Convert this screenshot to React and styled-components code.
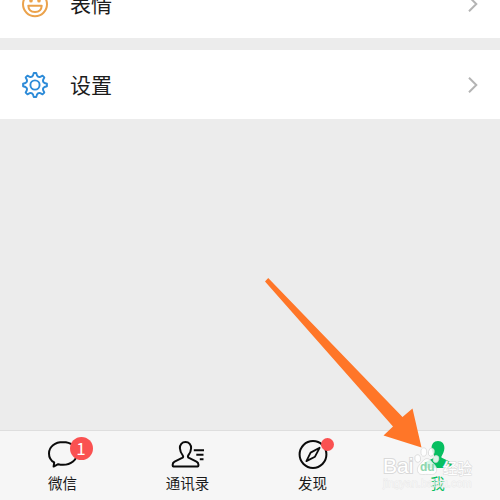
import React from "react";
import styled, { createGlobalStyle } from "styled-components";

const GlobalStyle = createGlobalStyle`
  * {
    box-sizing: border-box;
  }
  body {
    margin: 0;
    overflow: hidden;
    font-family: "Noto Sans CJK SC", sans-serif;
  }
`;

const ChevronIcon = () => (
  <svg width="12" height="18" viewBox="0 0 12 18" fill="none">
    <path d="M2 1.8L9.3 9L2 16.2" stroke="#b4b4b4" strokeWidth="2" />
  </svg>
);

const SmileIcon = () => (
  <svg width="28" height="28" viewBox="0 0 28 28" fill="none" stroke="#eba24b" strokeWidth="2">
    <circle cx="14" cy="14.3" r="12" />
    <path d="M7.3 15.8H20.7C20.5 19.8 17.8 22 14 22S7.5 19.8 7.3 15.8Z" strokeLinejoin="round" />
    <ellipse cx="10" cy="10.4" rx="0.8" ry="1.2" fill="#eba24b" />
    <ellipse cx="18" cy="10.4" rx="0.8" ry="1.2" fill="#eba24b" />
  </svg>
);

const GEAR_TEETH = 8;

// rounded cog outline: every tooth is an arc of the outer radius joined by a valley
const gearPath = () => {
  const point = (radius, degrees) => {
    const angle = (degrees * Math.PI) / 180;
    return `${(14 + radius * Math.sin(angle)).toFixed(2)} ${(14 - radius * Math.cos(angle)).toFixed(2)}`;
  };
  let path = `M${point(12, -6)}`;
  for (let i = 0; i < GEAR_TEETH; i++) {
    const a = i * 45;
    path += `L${point(12, a + 6)}L${point(9.7, a + 12)}Q${point(8.1, a + 22.5)} ${point(9.7, a + 33)}L${point(12, a + 39)}`;
  }
  return `${path}Z`;
};

const GearIcon = () => (
  <svg width="28" height="28" viewBox="0 0 28 28" fill="none" stroke="#2d8bd8" strokeWidth="1.9">
    <path d={gearPath()} strokeLinejoin="round" />
    <circle cx="14" cy="14" r="4.6" />
  </svg>
);

const ChatIcon = () => (
  <svg width="34" height="30" viewBox="0 0 34 30" fill="none" stroke="#0b0b0b" strokeWidth="2">
    <path
      d="M17 2C8.9 2 3 6.9 3 13.4C3 17.3 5 20.6 8.2 22.4L7.6 26.6L12.2 24.2C13.7 24.6 15.3 24.8 17 24.8C25.1 24.8 31 19.8 31 13.4S25.1 2 17 2Z"
      strokeLinejoin="round"
    />
  </svg>
);

const ContactsIcon = () => (
  <svg width="34" height="30" viewBox="0 0 34 30" fill="none" stroke="#0b0b0b" strokeWidth="2">
    <path
      d="M14.5 2C10.9 2 8.7 4.7 8.9 8.3C9.1 11.5 10.3 13.6 11.8 15.5C12.5 16.5 12.2 17.3 11.1 17.9L3.6 21.7C2.3 22.4 1.7 23.3 1.7 24.6V25.7C1.7 26.2 2 26.4 2.4 26.4H26.7C27.1 26.4 27.4 26.2 27.4 25.7V24.6C27.4 23.3 26.8 22.4 25.5 21.7L18 17.9C16.9 17.3 16.6 16.5 17.2 15.5C18.8 13.6 20 11.5 20.1 8.3C20.3 4.7 18.1 2 14.5 2Z"
      strokeLinejoin="round"
    />
    <path d="M22.8 10.3H33M25.3 14.8H32.5M28.8 19.2H32.5" />
  </svg>
);

const CompassIcon = () => (
  <svg width="34" height="30" viewBox="0 0 34 30" fill="none" stroke="#0b0b0b" strokeWidth="2">
    <circle cx="17" cy="14.5" r="13.4" />
    <path d="M23.6 7.8L19 16.7L10.4 21.1L14.6 12.6Z" strokeWidth="1.8" strokeLinejoin="round" />
  </svg>
);

const MeIcon = () => (
  <svg width="34" height="30" viewBox="0 0 34 30" fill="#06bf60">
    <path d="M17 1C12.8 1 10.4 4.2 10.6 8.2C10.8 11.6 12 13.8 13.3 15.9C13.9 17 13.7 17.4 12.7 17.9L5.5 21.5C3.8 22.4 3.1 23.4 3.1 25V26.8C3.1 27.6 3.5 28 4.2 28H29.8C30.5 28 30.9 27.6 30.9 26.8V25C30.9 23.4 30.2 22.4 28.5 21.5L21.3 17.9C20.3 17.4 20.1 17 20.7 15.9C22 13.8 23.2 11.6 23.4 8.2C23.6 4.2 21.2 1 17 1Z" />
  </svg>
);

const PawIcon = () => (
  <svg width="26" height="30" viewBox="0 0 26 30" fill="#fff" fillOpacity="0.85" stroke="#d6d6d6" strokeWidth="0.7">
    <ellipse cx="3.7" cy="11.5" rx="2.9" ry="3.8" transform="rotate(-12 3.7 11.5)" />
    <ellipse cx="9.8" cy="5" rx="2.9" ry="4.2" />
    <ellipse cx="17.3" cy="5.2" rx="2.9" ry="4.1" transform="rotate(12 17.3 5.2)" />
    <ellipse cx="22" cy="12" rx="2.8" ry="3.6" transform="rotate(12 22 12)" />
    <path
      d="M13 11.5C16 11.5 17.1 14.4 19.4 16.6C21.7 18.8 23.4 21.2 22.2 24.8C20.9 28.4 16.8 27.4 13 27.4S5.1 28.4 3.8 24.8C2.6 21.2 4.3 18.8 6.6 16.6C8.9 14.4 10 11.5 13 11.5Z"
    />
  </svg>
);

const App = () => {
  return (
    <Screen>
      <GlobalStyle />
      <Row className="row--cut">
        <SmileIcon />
        <RowLabel>表情</RowLabel>
        <ChevronIcon />
      </Row>
      <Row>
        <GearIcon />
        <RowLabel>设置</RowLabel>
        <ChevronIcon />
      </Row>
      <TabBar>
        <Tab>
          <TabIcon>
            <ChatIcon />
            <Badge>1</Badge>
          </TabIcon>
          微信
        </Tab>
        <Tab>
          <TabIcon>
            <ContactsIcon />
          </TabIcon>
          通讯录
        </Tab>
        <Tab>
          <TabIcon>
            <CompassIcon />
            <Dot />
          </TabIcon>
          发现
        </Tab>
        <Tab $active>
          <TabIcon>
            <MeIcon />
          </TabIcon>
          我
        </Tab>
      </TabBar>
      <Arrow width="160" height="172" viewBox="0 0 160 172">
        <path d="M3.2 0L137.5 139L147.5 130.5L156.5 169.5L118.5 157.5L128 148.5L0 3.5Z" fill="#ff7628" />
      </Arrow>
      <Watermark>
        <Brand>
          <Latin>Bai</Latin>
          <Paw>
            <PawIcon />
            <em>du</em>
          </Paw>
          <Chinese>经验</Chinese>
        </Brand>
        <Site>jingyan.baidu.com</Site>
      </Watermark>
    </Screen>
  );
};

const Screen = styled.main`
  position: relative;
  width: 500px;
  height: 500px;
  display: flex;
  flex-direction: column;
  gap: 12px;
  overflow: hidden;
  background-color: #ececec;
`;
const Row = styled.section`
  flex: none;
  height: 69px;
  display: flex;
  align-items: center;
  padding: 0 21px;
  background-color: white;
  &.row--cut {
    margin-top: -31px;
  }
`;
const RowLabel = styled.span`
  flex: 1;
  margin-left: 21px;
  padding-bottom: 1px;
  font-size: 21px;
  line-height: 30px;
  color: #1c1c1c;
`;
const TabBar = styled.nav`
  height: 70px;
  margin-top: auto;
  display: flex;
  background-color: #f6f6f6;
  border-top: 1px solid #dedede;
`;
const Tab = styled.div`
  flex: 1;
  display: flex;
  flex-direction: column;
  align-items: center;
  padding-top: 9px;
  font-size: 14.5px;
  line-height: 25px;
  color: ${({ $active }) => ($active ? "#06bf60" : "#1a1a1a")};
`;
const TabIcon = styled.div`
  position: relative;
  height: 30px;
  svg {
    display: block;
  }
`;
const Badge = styled.span`
  position: absolute;
  top: -3px;
  left: 24px;
  width: 23px;
  height: 23px;
  border-radius: 50%;
  background-color: #fa5151;
  color: white;
  font-size: 17px;
  line-height: 22px;
  text-align: center;
`;
const Dot = styled.span`
  position: absolute;
  top: -2px;
  left: 25px;
  width: 13px;
  height: 13px;
  border-radius: 50%;
  background-color: #fa5151;
`;
const Watermark = styled.div`
  position: absolute;
  top: 447px;
  left: 383px;
  width: 92px;
  font-family: "Liberation Sans", sans-serif;
  color: white;
`;
const Brand = styled.div`
  height: 30px;
  display: flex;
  align-items: flex-end;
`;
const Latin = styled.span`
  width: 31px;
  font-size: 21px;
  line-height: 22px;
  -webkit-text-stroke: 2px #d9d9d9;
  paint-order: stroke fill;
`;
const Paw = styled.div`
  position: relative;
  width: 26px;
  height: 30px;
  em {
    position: absolute;
    left: 6px;
    bottom: 4px;
    font-size: 12px;
    line-height: 12px;
    font-style: normal;
    font-weight: 700;
    color: #8fd6ae;
  }
`;
const Chinese = styled.span`
  margin-left: 3px;
  font-family: "Noto Sans CJK SC", sans-serif;
  font-size: 14.5px;
  line-height: 19px;
  -webkit-text-stroke: 1.2px #dcdcdc;
  paint-order: stroke fill;
`;
const Site = styled.div`
  font-size: 11px;
  line-height: 13px;
  color: rgba(255, 255, 255, 0.6);
  -webkit-text-stroke: 0.8px rgba(222, 222, 222, 0.6);
  paint-order: stroke fill;
`;
const Arrow = styled.svg`
  position: absolute;
  top: 278px;
  left: 265px;
`;

export default App;
